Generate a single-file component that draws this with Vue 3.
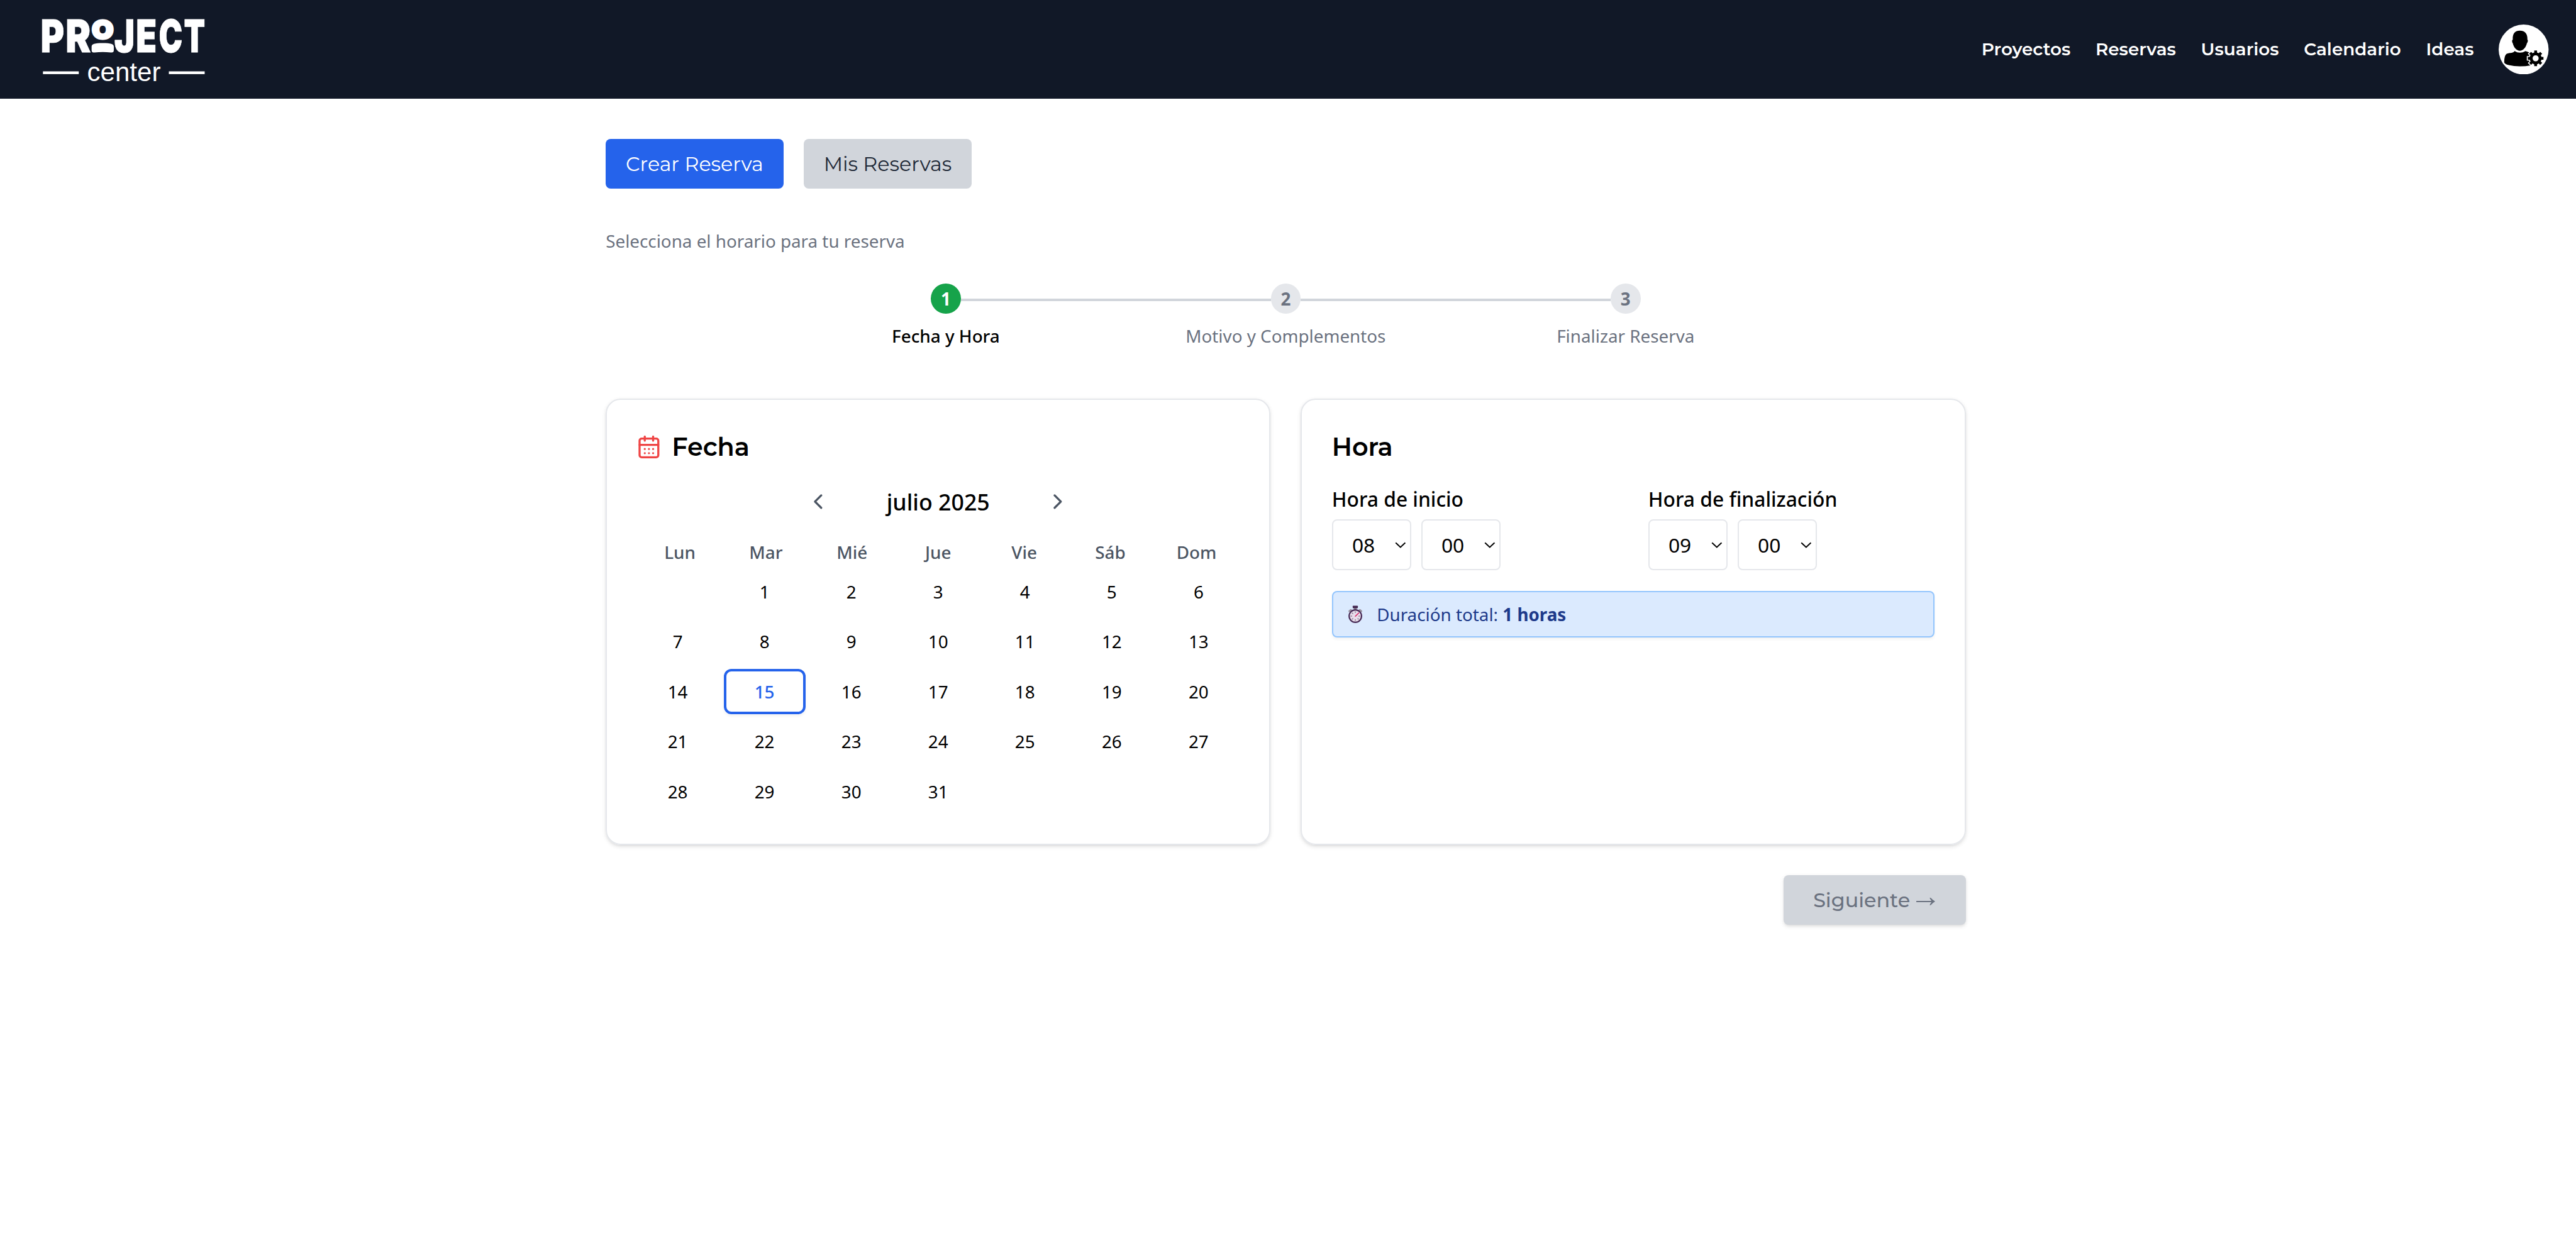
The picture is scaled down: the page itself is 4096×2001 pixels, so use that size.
<script setup>
const links = ['Proyectos', 'Reservas', 'Usuarios', 'Calendario', 'Ideas']
const steps = ['Fecha y Hora', 'Motivo y Complementos', 'Finalizar Reserva']
const weekdays = ['Lun', 'Mar', 'Mié', 'Jue', 'Vie', 'Sáb', 'Dom']
const days = [null, ...Array.from({ length: 31 }, (_, i) => i + 1)]
const selected = 15
const fields = [
  { label: 'Hora de inicio', hour: '08', minute: '00' },
  { label: 'Hora de finalización', hour: '09', minute: '00' }
]
const toothAngles = [0, 45, 90, 135, 180, 225, 270, 315]
const tickAngles = [0, 90, 135, 180, 225, 270, 315]
</script>

<template>
  <div class="page">
    <header class="topbar">
      <svg class="logo" viewBox="0 0 330 130" aria-label="Project center">
        <g class="mark">
          <text x="-3" y="71" textLength="47" lengthAdjust="spacingAndGlyphs">P</text>
          <text x="46.500" y="71" textLength="50" lengthAdjust="spacingAndGlyphs">R</text>
          <text class="ring" x="98.500" y="45" textLength="43" lengthAdjust="spacingAndGlyphs">O</text>
          <text x="143" y="71" textLength="40.500" lengthAdjust="spacingAndGlyphs">J</text>
          <text x="186" y="71" textLength="41" lengthAdjust="spacingAndGlyphs">E</text>
          <text x="231" y="71" textLength="47" lengthAdjust="spacingAndGlyphs">C</text>
          <text x="281" y="71" textLength="42" lengthAdjust="spacingAndGlyphs">T</text>
        </g>
        <path d="M98 60C98 55 104 53 120 53S142 55 142 60V67C142 71 140 72 136 71.600Q120 70 104 71.600C99 72 98 70 98 66Z" fill="#fff" />
        <rect x="1.600" y="109" width="71" height="5.500" fill="#fff" />
        <rect x="251" y="109" width="71" height="5.500" fill="#fff" />
        <text class="sub" x="89" y="128">center</text>
      </svg>
      <nav class="menu">
        <a v-for="l in links" :key="l" class="link">{{ l }}</a>
        <svg class="avatar" viewBox="0 0 99 99">
          <circle cx="49.500" cy="49.500" r="49.500" fill="#fff" />
          <path d="M42 12C31 12 27.500 19 28 30C26 31 26.500 35 28 37C29.500 45 36 52 42 52S54.500 45 56 37C58 35 58.500 31 57 30C57.500 19 53 12 42 12Z" />
          <path d="M31.700 52.700Q42 59 53.300 52.700L64 56.500V81Q53 83 42 83Q30 83 20 80.500Q12 78.500 11 75Q11 61 16 58Q20 56 26 56Q30 55.500 31.700 52.700Z" />
          <g transform="translate(73.300 67)">
            <g stroke="#fff" stroke-width="9">
              <circle r="13.800" fill="#fff" stroke="none" />
              <path v-for="a in toothAngles" :key="a" :transform="`rotate(${a})`" d="M0 -9V-17.500" />
            </g>
            <g stroke="#000" stroke-width="5.600">
              <path v-for="a in toothAngles" :key="a" :transform="`rotate(${a})`" d="M0 -9V-15.500" />
            </g>
            <circle r="9" fill="#fff" stroke="#000" stroke-width="6" />
          </g>
        </svg>
      </nav>
    </header>

    <main class="content">
      <div class="tabs">
        <button class="tab active">Crear Reserva</button>
        <button class="tab">Mis Reservas</button>
      </div>
      <p class="hint">Selecciona el horario para tu reserva</p>

      <div class="track">
        <template v-for="(s, i) in steps" :key="s">
          <span v-if="i" class="line"></span>
          <span :class="['dot', { on: i === 0 }]">{{ i + 1 }}</span>
        </template>
      </div>
      <div class="labels">
        <span v-for="(s, i) in steps" :key="s" :class="{ on: i === 0 }">{{ s }}</span>
      </div>

      <div class="cards">
        <section class="card">
          <h2 class="title">
            <svg class="cal" viewBox="0 0 24 24" fill="none" stroke="#ef4444" stroke-width="2" stroke-linecap="round" stroke-linejoin="round">
              <rect x="3" y="4" width="18" height="18" rx="2" />
              <path d="M16 2v4M8 2v4M3 10h18M8 14h.01M12 14h.01M16 14h.01M8 18h.01M12 18h.01M16 18h.01" />
            </svg>
            Fecha
          </h2>
          <div class="month">
            <svg viewBox="0 0 24 24"><path d="M15 18l-6-6 6-6" /></svg>
            <span class="name">julio 2025</span>
            <svg viewBox="0 0 24 24"><path d="M9 18l6-6-6-6" /></svg>
          </div>
          <div class="week"><span v-for="w in weekdays" :key="w">{{ w }}</span></div>
          <div class="days">
            <span v-for="(d, i) in days" :key="i" :class="['day', { picked: d === selected }]">{{ d }}</span>
          </div>
        </section>

        <section class="card">
          <h2 class="title">Hora</h2>
          <div class="fields">
            <div v-for="f in fields" :key="f.label">
              <div class="label">{{ f.label }}</div>
              <div class="selects">
                <div v-for="(v, i) in [f.hour, f.minute]" :key="i" class="select">
                  <span>{{ v }}</span>
                  <svg viewBox="0 0 22 12"><path d="M1.500 1.500L11 10.500L20.500 1.500" /></svg>
                </div>
              </div>
            </div>
          </div>
          <div class="total">
            <svg class="watch" viewBox="0 0 28 35">
              <path d="M2 11.500L5 9M22.600 9L25.600 11.500" stroke="#9b93a0" stroke-width="3.600" stroke-linecap="round" />
              <rect x="11" y="4" width="5.500" height="5" fill="#8d8592" />
              <rect x="8.600" y="0.500" width="10.200" height="5" rx="1.200" fill="#43264f" />
              <circle cx="13.800" cy="21.200" r="12.300" fill="#e8dcea" stroke="#472a55" stroke-width="2.700" />
              <g transform="translate(13.800 21.200)" stroke="#85798f" stroke-width="1.700">
                <path v-for="a in tickAngles" :key="a" :transform="`rotate(${a})`" d="M0 -6.300V-9.400" />
              </g>
              <path d="M13.800 21.500L20.500 15" stroke="#d81b60" stroke-width="1.900" stroke-linecap="round" />
            </svg>
            <span>Duración total: <b>1 horas</b></span>
          </div>
        </section>
      </div>

      <div class="actions">
        <button class="next"><span>Siguiente<span class="arrow">→</span></span></button>
      </div>
    </main>
  </div>
</template>

<style>
html { font-size: 80.266px; }
body { margin: 0; background: #fff; }
</style>

<style scoped>
.page { font-family: "Noto Sans", sans-serif; color: #000; font-size: 0.3465rem; min-height: 100vh; }
.topbar { display: flex; justify-content: space-between; align-items: center; height: 1.96rem; box-sizing: border-box; padding: 0 0.54rem 0 0.83rem; background: #111827; }
.logo { width: 3.3rem; height: 1.3rem; display: block; overflow: visible; }
.mark { font-family: Inter, sans-serif; font-weight: 900; font-size: 89px; fill: #fff; stroke: #fff; stroke-width: 1; }
.ring { font-size: 52px; stroke-width: 4; }
.sub { font-family: "Liberation Sans", Arial, sans-serif; font-size: 52.5px; fill: #fff; }
.menu { display: flex; align-items: center; gap: 0.495rem; font-family: Montserrat, Inter, sans-serif; font-weight: 600; font-size: 0.3465rem; color: #fff; white-space: nowrap; }
.link { padding-bottom: 0.02rem; }
.avatar { width: 0.99rem; height: 0.99rem; display: block; }
.content { width: 26.94rem; margin: 0 0 0 12rem; padding-top: 0.79rem; }
.tabs { display: flex; gap: 0.4rem; }
button { border: 0; margin: 0; padding: 0; display: flex; align-items: center; justify-content: center; font-family: Montserrat, Inter, sans-serif; }
.tab { width: 3.33rem; height: 0.99rem; border-radius: 0.1rem; background: #d1d5db; color: #1f2937; font-size: 0.396rem; white-space: nowrap; }
.tab.active { width: 3.52rem; background: #2563eb; color: #fff; }
.hint { margin: 0.8rem 0 0; line-height: 0.495rem; color: #6b7280; }
.track { display: flex; align-items: center; width: 14.06rem; margin: 0.585rem auto 0; }
.dot { width: 0.594rem; height: 0.594rem; border-radius: 50%; background: #e5e7eb; color: #6b7280; display: flex; align-items: center; justify-content: center; font-weight: 700; }
.dot.on { background: #16a34a; color: #fff; }
.line { flex: 1; height: 0.05rem; margin-top: 0.05rem; background: #d1d5db; }
.labels { display: grid; grid-template-columns: repeat(3, 1fr); width: 20.2rem; margin: 0.203rem auto 0; line-height: 0.495rem; text-align: center; color: #6b7280; }
.labels .on { color: #000; font-weight: 500; }
.cards { display: grid; grid-template-columns: 1fr 1fr; gap: 0.6rem; margin-top: 0.987rem; }
.card { box-sizing: border-box; height: 8.85rem; padding: 0.59rem; border: 2px solid #e5e7eb; border-radius: 0.297rem; box-shadow: 0 0.025rem 0.075rem rgba(0,0,0,.1), 0 0.025rem 0.05rem -0.025rem rgba(0,0,0,.1); }
.title { margin: 0; display: flex; align-items: center; gap: 0.21rem; height: 0.693rem; font-family: Montserrat, Inter, sans-serif; font-weight: 600; font-size: 0.495rem; }
.cal { width: 0.495rem; height: 0.495rem; margin-left: -0.01rem; }
.month { display: flex; align-items: center; justify-content: space-between; width: 5.24rem; height: 0.495rem; margin: 0.49rem auto 0; font-size: 0.445rem; font-weight: 500; line-height: 0.495rem; }
.month .name { padding-top: 0.027rem; }
.month svg { width: 0.495rem; height: 0.495rem; fill: none; stroke: #4b5563; stroke-width: 2; stroke-linecap: round; stroke-linejoin: round; }
.week { display: grid; grid-template-columns: repeat(7, 1fr); margin-top: 0.507rem; line-height: 0.495rem; text-align: center; font-weight: 500; color: #4b5563; }
.days { display: grid; grid-template-columns: repeat(7, 1fr); gap: 0.099rem; margin-top: 0.084rem; }
.day { height: 0.891rem; box-sizing: border-box; display: flex; align-items: center; justify-content: center; }
.picked { border: 0.05rem solid #2563eb; border-radius: 0.149rem; color: #2563eb; font-weight: 500; box-shadow: 0 0.025rem 0.05rem rgba(0,0,0,.05); }
.fields { display: grid; grid-template-columns: 1fr 1fr; gap: 0.594rem; margin-top: 0.393rem; font-size: 0.396rem; }
.label { line-height: 0.594rem; font-weight: 500; }
.selects { display: flex; gap: 0.2rem; margin-top: 0.104rem; }
.select { box-sizing: border-box; width: 1.57rem; height: 1.007rem; padding: 0 0.075rem 0 0.375rem; border: 2px solid #e5e7eb; border-radius: 0.1rem; display: flex; align-items: center; justify-content: space-between; }
.select svg { width: 0.22rem; height: 0.12rem; fill: none; stroke: #000; stroke-width: 2.500; }
.total { box-sizing: border-box; display: flex; align-items: center; height: 0.927rem; margin-top: 0.403rem; padding-left: 0.3rem; border: 2px solid #93c5fd; border-radius: 0.1rem; background: #dbeafe; color: #1e3a8a; box-shadow: 0 0.025rem 0.05rem rgba(0,0,0,.05); }
.watch { width: 0.28rem; height: 0.35rem; margin-right: 0.285rem; fill: none; overflow: visible; }
.actions { display: flex; justify-content: flex-end; margin-top: 0.594rem; }
.next { width: 3.61rem; height: 0.99rem; padding-left: 0.59rem; justify-content: flex-start; white-space: nowrap; border-radius: 0.1rem; background: #d1d5db; color: #6b7280; font-size: 0.396rem; font-weight: 500; box-shadow: 0 0.025rem 0.075rem rgba(0,0,0,.1), 0 0.025rem 0.05rem -0.025rem rgba(0,0,0,.1); }
.arrow { font-family: "Liberation Sans", sans-serif; font-size: 0.62rem; font-weight: 400; line-height: 0; vertical-align: 0.01rem; }
</style>
